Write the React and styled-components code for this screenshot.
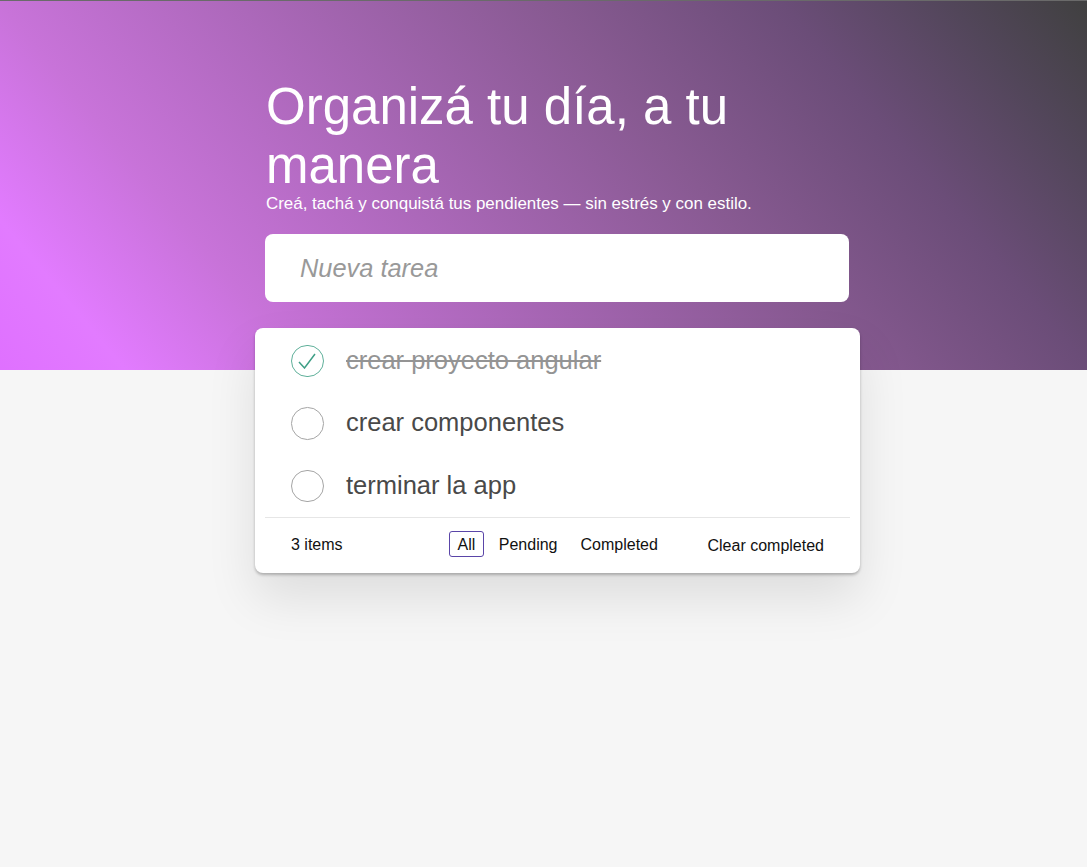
import React from 'react';
import styled, { createGlobalStyle } from 'styled-components';

const GlobalStyle = createGlobalStyle`
  html, body {
    margin: 0;
    padding: 0;
    background: #f6f6f6;
  }
  body {
    min-height: 867px;
    font-family: "Liberation Sans", Arial, sans-serif;
  }
  * {
    box-sizing: border-box;
  }
`;

const Hero = styled.header`
  height: 370px;
  padding-left: 255px;
  border-top: 1px solid #6a6a6a;
  background: linear-gradient(
    50deg,
    #df70ff 0%,
    #e27bff 9%,
    #c873d9 22%,
    #885a92 61%,
    #6b4d78 78%,
    #52465a 90%,
    #404040 100%
  );
`;

const Column = styled.main`
  width: 605px;
  padding-top: 76px;
  display: flex;
  flex-direction: column;
`;

const Intro = styled.div`
  padding: 0 11px 0 10px;
`;

const Title = styled.h1`
  margin: 0;
  padding-left: 1px;
  max-width: 520px;
  font-size: 51px;
  line-height: 59px;
  font-weight: 400;
  color: #fff;
`;

const Subtitle = styled.p`
  margin: 0;
  padding-left: 1px;
  font-size: 16.96px;
  line-height: 18px;
  color: #fff;
`;

const NewTask = styled.input`
  display: block;
  width: 100%;
  height: 68px;
  margin-top: 21px;
  padding: 0 35px;
  border: 0;
  border-radius: 8px;
  background: #fff;
  font-family: inherit;
  font-size: 25.4px;
  color: #444;
  outline: none;

  &::placeholder {
    font-style: italic;
    color: #999;
    opacity: 1;
  }
`;

const Card = styled.section`
  position: relative;
  margin-top: 26px;
  height: 245px;
  border-radius: 8px;
  background: #fff;
  box-shadow: 0 2px 3px rgba(0, 0, 0, 0.25), 0 25px 50px rgba(0, 0, 0, 0.1);
`;

const TaskList = styled.ul`
  margin: 0;
  padding: 2px 0 0;
  list-style: none;
`;

const TaskRow = styled.li`
  height: 62.33px;
  padding: 0 35px 0 36px;
  display: flex;
  align-items: center;
  gap: 22.5px;
`;

const Circle = styled.span`
  width: 32.5px;
  height: 32.5px;
  flex: none;
  border-radius: 50%;
  border: 1px solid ${props => (props.$done ? '#5fb09a' : '#a5a5a5')};
  display: flex;
  align-items: center;
  justify-content: center;
`;

const TaskText = styled.span`
  font-size: 25.5px;
  line-height: 28px;
  margin-top: -2px;
  color: ${props => (props.$done ? '#949494' : '#494949')};
  text-decoration: ${props => (props.$done ? 'line-through' : 'none')};
`;

const Footer = styled.footer`
  margin: 0 10px;
  height: 56px;
  border-top: 1px solid #e6e6e6;
  padding: 0 26px 3px;
  display: flex;
  align-items: center;
  font-size: 16px;
  color: #111;
`;

const Count = styled.span`
  flex: 0 0 158px;
  padding-top: 2px;
`;

const Filters = styled.nav`
  display: flex;
  gap: 7px;
`;

const FilterButton = styled.button`
  height: 26px;
  padding: 2px ${props => (props.$active ? '7.5px' : '7px')} 0;
  border: 1px solid ${props => (props.$active ? '#5a45a8' : 'transparent')};
  border-radius: 3px;
  background: none;
  font-family: inherit;
  font-size: 16px;
  color: #111;
`;

const ClearButton = styled.button`
  padding: 0;
  margin: 5px 0 0 auto;
  border: 0;
  background: none;
  font-family: inherit;
  font-size: 16px;
  color: #111;
`;

const tasks = [
  { id: 1, title: 'crear proyecto angular', done: true },
  { id: 2, title: 'crear componentes', done: false },
  { id: 3, title: 'terminar la app', done: false },
];

const filters = ['All', 'Pending', 'Completed'];

function CheckMark() {
  return (
    <svg width="18" height="16" viewBox="0 0 18 16" fill="none">
      <path d="M1 9 L6.5 15 L17 1" stroke="#3f9f86" strokeWidth="1.5" />
    </svg>
  );
}

export default function App() {
  return (
    <>
      <GlobalStyle />
      <Hero>
        <Column>
          <Intro>
            <Title>Organizá tu día, a tu manera</Title>
            <Subtitle>Creá, tachá y conquistá tus pendientes — sin estrés y con estilo.</Subtitle>
            <NewTask placeholder="Nueva tarea" />
          </Intro>
          <Card>
            <TaskList>
              {tasks.map(task => (
                <TaskRow key={task.id}>
                  <Circle $done={task.done}>{task.done && <CheckMark />}</Circle>
                  <TaskText $done={task.done}>{task.title}</TaskText>
                </TaskRow>
              ))}
            </TaskList>
            <Footer>
              <Count>3 items</Count>
              <Filters>
                {filters.map(name => (
                  <FilterButton key={name} $active={name === 'All'}>
                    {name}
                  </FilterButton>
                ))}
              </Filters>
              <ClearButton>Clear completed</ClearButton>
            </Footer>
          </Card>
        </Column>
      </Hero>
    </>
  );
}
